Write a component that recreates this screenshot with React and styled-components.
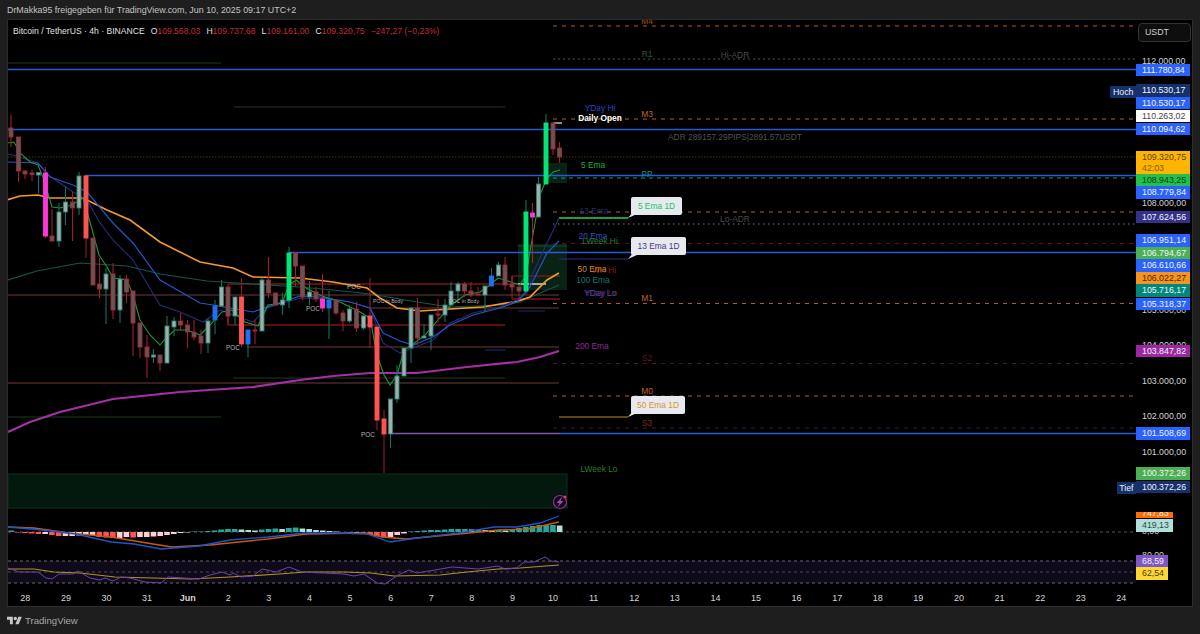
import styled, { createGlobalStyle } from "styled-components";

const GlobalStyle = createGlobalStyle`
  html, body { margin: 0; padding: 0; background: #1e1e1e; }
  body { font-family: "Liberation Sans", Arial, sans-serif; }
`;

const Page = styled.div`
  width: 1200px;
  height: 634px;
  display: flex;
  flex-direction: column;
  overflow: hidden;
  background: #1e1e1e;
`;
const ShareLine = styled.div`
  height: 19px;
  padding-left: 7px;
  box-sizing: border-box;
  color: #c4c4c4;
  font-size: 8.9px;
  line-height: 21px;
  white-space: nowrap;
`;
const Frame = styled.div`
  height: 588px;
  margin: 0 7px 0 7px;
  display: flex;
  background: #000;
  border-left: 1px solid #2a2a2a;
  border-top: 1px solid #2a2a2a;
  border-right: 1px solid #2e2e2e;
  border-bottom: 1px solid #2e2e2e;
  box-sizing: border-box;
`;
const ChartColumn = styled.div`
  width: 1128px;
  display: flex;
  flex-direction: column;
  overflow: hidden;
`;
const Stage = styled.div`
  position: relative;
  height: 570px;
  overflow: hidden;
`;
const ChartSvg = styled.svg`
  display: block;
  position: absolute;
  left: 0;
  top: 0;
`;
const Legend = styled.div`
  position: absolute;
  left: 5px;
  top: 5px;
  display: flex;
  align-items: center;
  gap: 6px;
  font-size: 8.6px;
  line-height: 12px;
  color: #e0e0e0;
  white-space: nowrap;
`;
const LegendTitle = styled.span`
  margin-right: 0;
`;
const Ohlc = styled.span`
  color: #e0e0e0;
  span {
    color: #c4283c;
  }
`;
const Change = styled.span`
  color: #c4283c;
`;
const ChartLabel = styled.span`
  position: absolute;
  left: ${(p) => p.$x - 8}px;
  top: ${(p) => p.$y - 20}px;
  transform: translate(-50%, -50%);
  color: ${(p) => p.$color};
  font-size: ${(p) => p.$size || 8.4}px;
  font-weight: ${(p) => (p.$bold ? 700 : 400)};
  white-space: nowrap;
`;
const Callout = styled.div`
  position: absolute;
  left: ${(p) => p.$x - 8}px;
  top: ${(p) => p.$y - 20}px;
  width: ${(p) => p.$w}px;
  height: 18px;
  box-sizing: border-box;
  background: #e6eaef;
  border-radius: 2px;
  color: ${(p) => p.$color};
  font-size: 8.4px;
  line-height: 18px;
  text-align: center;
  white-space: nowrap;
`;
const TimeAxis = styled.div`
  height: 16px;
  margin-left: -3px;
  display: grid;
  grid-template-columns: repeat(28, 40.6px);
  align-items: center;
`;
const TimeLabel = styled.span`
  text-align: center;
  color: #d6d6d6;
  font-size: 9px;
  font-weight: ${(p) => (p.$bold ? 700 : 400)};
  line-height: 16px;
`;
const PriceAxis = styled.div`
  position: relative;
  flex: 1;
`;
const UnitButton = styled.div`
  position: absolute;
  left: 2px;
  top: 3px;
  width: 53px;
  height: 19px;
  box-sizing: border-box;
  border: 1px solid #333;
  border-radius: 4px;
  background: #0e0e0e;
  color: #cfcfcf;
  font-size: 8.8px;
  line-height: 17px;
  padding-left: 6px;
`;
const PlainPrice = styled.span`
  position: absolute;
  left: 6px;
  top: ${(p) => p.$y - 20 - 6}px;
  color: #d2d2d2;
  font-size: 8.8px;
  line-height: 12px;
`;
const PriceTag = styled.div`
  position: absolute;
  left: 0;
  top: ${(p) => p.$y - 20 - 6.5}px;
  width: ${(p) => p.$w || 54}px;
  height: ${(p) => p.$h || 12.5}px;
  box-sizing: border-box;
  padding-left: 6px;
  overflow: hidden;
  background: ${(p) => p.$bg};
  color: ${(p) => p.$fg || "#f0f4ff"};
  font-size: 8.8px;
  line-height: ${(p) => p.$lh || 12.5}px;
`;
const PriceSub = styled.div`
  opacity: 0.75;
  line-height: 10.5px;
`;
const SideTag = styled.div`
  position: absolute;
  right: 56px;
  top: ${(p) => p.$y - 20 - 6.5}px;
  height: 12.5px;
  padding: 0 2.5px;
  background: #15306b;
  color: #f0f0f0;
  font-size: 8.8px;
  line-height: 12.5px;
`;
const Footer = styled.div`
  height: 27px;
  padding-left: 7px;
  display: flex;
  align-items: center;
  gap: 3px;
  color: #a8a8a8;
  font-size: 9.6px;
`;

// x, wick top, wick bottom, body top, body bottom, kind
const candles = [
  [11, 115, 147, 128, 137, "d"], [18.5, 137, 182, 137, 171, "d"], [25, 170, 179, 171, 174, "d"],
  [32, 170, 181, 173, 174.5, "d"], [38.5, 173, 193, 172.5, 175, "u"], [45.5, 167, 238, 173, 236, "p"],
  [52, 209, 241, 236, 241, "d"], [59, 203, 247, 212, 241, "u"], [65.5, 187, 225, 202, 212, "u"],
  [72.5, 192, 241, 202, 208, "d"], [79, 172, 215, 176, 208, "u"], [86, 176, 258, 176, 238, "r"],
  [93, 238, 285, 238, 285, "d"], [99.5, 258, 298, 284, 289, "d"], [106, 268, 324, 274, 289, "u"],
  [113, 263, 319, 274, 310, "d"], [120, 275, 323, 279, 310, "u"], [126.5, 275, 303, 279, 292, "d"],
  [133, 291, 356, 291, 323, "d"], [140, 323, 358, 323, 347, "d"], [147, 335, 378, 347, 357, "d"],
  [153.5, 349, 363, 355, 357, "u"], [160, 355, 371, 355, 363, "d"], [167, 316, 363, 326, 363, "u"],
  [174, 317, 336, 321, 327, "u"], [180.5, 313, 330, 321, 325, "d"], [187.5, 320, 348, 325, 332, "d"],
  [194, 320, 340, 332, 337, "d"], [201, 330, 354, 336, 343, "d"], [208, 318, 353, 321, 343, "u"],
  [215, 300, 334, 306, 320, "b"], [221.5, 280, 306, 287, 306, "u"], [228, 287, 324, 287, 316, "d"],
  [235, 297, 325, 297, 316, "u"], [241.5, 278, 347, 297, 344, "r"], [248, 330, 357, 330, 344, "b"],
  [255, 320, 344, 330, 331, "d"], [262, 278, 331, 280, 331, "u"], [268.5, 257, 298, 280, 293, "d"],
  [275.5, 293, 305, 293, 305, "d"], [282.5, 293, 315, 300, 305, "u"], [289, 247, 308, 253, 300, "g"],
  [295.5, 252, 287, 253, 266, "d"], [302.5, 266, 300, 266, 297, "d"], [309.5, 281, 305, 292, 297, "u"],
  [316, 287, 302, 292, 299, "d"], [322.5, 274, 312, 299, 308, "p"], [329, 291, 339, 300, 308, "b"],
  [336, 300, 315, 300, 313, "d"], [343, 310, 331, 313, 321, "d"], [349.5, 305, 323, 309, 321, "u"],
  [356.5, 302, 332, 309, 328, "d"], [363.5, 313, 330, 316, 328, "u"], [370, 278, 348, 316, 327, "r"],
  [377, 327, 430, 327, 420, "r"], [384, 410, 473, 419, 434, "r"], [390.5, 399, 448, 399, 434, "u"],
  [397, 365, 403, 376, 399, "u"], [404, 348, 376, 348, 376, "u"], [411, 308, 363, 308, 348, "u"],
  [417.5, 298, 345, 308, 338, "d"], [424, 324, 338, 336, 338, "u"], [431, 315, 350, 315, 336, "u"],
  [438, 299, 323, 314, 315, "d"], [445, 299, 322, 305, 315, "u"], [451, 282, 305, 291, 305, "u"],
  [458, 282, 303, 284, 291, "u"], [464.5, 282, 297, 284, 291, "d"], [471, 282, 297, 291, 295, "d"],
  [478, 287, 295, 294, 295, "d"], [485, 286, 312, 286, 295, "u"], [491.5, 268, 286, 276, 286, "b"],
  [498.5, 262, 276, 265, 276, "u"], [505, 257, 290, 265, 285, "d"], [512, 276, 290, 284, 287, "d"],
  [519, 287, 300, 287, 291, "d"], [526, 200, 292, 212, 291, "g"], [532.5, 203, 263, 213, 217, "p"],
  [538.5, 177, 217, 184, 217, "u"], [546, 114, 184, 123, 184, "g"], [553, 123, 155, 123, 149, "d"],
  [559.5, 142, 163, 148, 157, "d"],
];

const kinds = {
  u: { fill: "#a4aba9", stroke: "#1c8a7a", wick: "#15705f" },
  d: { fill: "#5a5a5a", stroke: "#b3202f", wick: "#9c1f2e" },
  p: { fill: "#ff35dc", stroke: "#ff35dc", wick: "#a3213a" },
  r: { fill: "#ff5252", stroke: "#ff5252", wick: "#8f1f2c" },
  g: { fill: "#00e676", stroke: "#00e676", wick: "#15705f" },
  b: { fill: "#2070f0", stroke: "#2070f0", wick: "#15705f" },
};

const ema5 = "8,143 14,142 20,153 30,162 38,165 44,180 52,207 60,208 72,205 83,198 90,222 99,255 107,267 113,278 127,280 133,295 140,320 150,335 160,345 167,337 175,330 187,330 200,335 210,325 222,312 232,310 245,322 258,326 268,305 282,303 289,285 296,280 306,288 322,296 340,302 360,312 370,318 377,355 384,375 390,385 397,375 404,350 412,345 425,335 438,320 451,305 465,295 480,292 490,285 498,278 505,280 520,285 526,275 532,240 540,195 546,180 553,172 560,170";
const ema13 = "8,154 13,155 38,163 48,175 73,192 87,200 100,223 113,240 133,260 160,305 180,312 203,322 220,310 253,322 267,308 300,298 330,299 350,302 370,308 383,343 400,353 413,348 433,340 450,323 473,313 500,307 517,300 527,293 533,273 547,243 559,218";
const ema20 = "8,162 38,163 50,177 73,185 87,192 113,223 133,243 160,280 200,303 213,305 253,312 267,307 300,296 320,297 350,302 370,308 383,333 400,341 413,345 433,337 450,325 473,315 500,308 517,302 530,287 547,253 559,241";
const ema50 = "7,200 20,196 38,195 50,198 83,198 107,210 130,220 160,242 200,262 233,268 253,277 300,278 333,282 367,288 380,298 397,308 420,311 450,309 483,307 518,301 530,297 547,280 559,273";
const ema100 = "8,280 37,271 80,263 127,266 160,274 207,281 267,285 300,287 333,290 370,294 417,302 450,307 500,305 520,302 540,293 559,285";
const ema200 = "8,432 30,422 60,412 113,399 180,392 253,387 300,380 333,376 370,373 417,373 467,367 517,362 540,357 559,351";
const macdLine = "8,527 42,530 76,534 111,542 134,544 161,549 199,546 230,540 268,537 306,533 337,533 367,534 390,542 417,538 459,533 494,527 517,527 540,523 559,516";
const macdSignal = "8,527 34,528 69,533 111,537 153,544 172,547 210,545 268,539 306,534 364,533 383,537 406,539 459,534 498,530 528,529 559,522";
const rsiLine = "8,568 19,572 38,572 46,578 52,579 59,574 73,574 78,571 90,578 100,580 105,578 113,581 121,577 130,578 145,582 161,583 168,577 199,579 210,575 222,572 230,575 233,573 241,577 253,576 262,569 276,572 289,567 302,572 344,574 354,576 364,574 377,583 385,584 398,575 409,570 417,573 429,571 452,567 478,569 498,566 505,569 517,568 524,562 534,562 545,557 551,561 559,562";
const rsiSignal = "8,569 34,569 54,572 80,573 115,577 153,578 191,579 230,577 279,574 306,572 344,572 371,573 394,576 440,575 467,572 498,569 520,568 559,565";

const hist = [
  1.5, -0.5, -1, -1.5, -2, -2, -3, -4, -4, -4, -3.5, -3, -3, -5, -5.5, -6, -6, -5, -5.5, -5, -5, -4.5, -4, -3, -2, -1, -0.5,
  0.5, 0.5, 1, 1.5, 2.5, 3, 3, 2.5, 2, 1.5, 2.5, 3, 3.5, 3, 4, 4.5, 3.5, 3, 2, 1.5, 1, 0.5,
  -0.5, -1, -1, -1.5, -2, -4, -5.5, -5, -3, -1.5,
  0.5, 1, 1.5, 2, 2, 2.5, 3, 3, 3, 2.5, 2.5, 2, 1.5, 2, 1.5, 3, 4, 5, 6, 7, 7, 7, 6.5,
];

// y, x from, x to, colour, width, dash
const hLines = [
  [26, 553, 1136, "#b85c1a", 1, "4 5"],
  [59, 553, 1136, "#3c5a44", 1, "2 3"],
  [63, 8, 221, "#1a3a1c", 1],
  [69.5, 8, 1136, "#2a5bd0", 1.6],
  [107, 234, 505, "#1a3a1c", 1],
  [119, 553, 1136, "#b85c1a", 1, "4 5"],
  [129.5, 8, 1136, "#2a5bd0", 1.6],
  [157, 8, 1136, "#4d3608", 1, "1.5 1.5"],
  [175.5, 85, 1136, "#2a5bd0", 1.6],
  [178, 553, 1136, "#0f8f9c", 1, "4 4"],
  [212, 553, 1136, "#b85c1a", 1, "4 5"],
  [224, 553, 1136, "#7a7a7a", 1, "1.5 3.5"],
  [243.5, 553, 1136, "#4a1a1a", 1, "4 5"],
  [252.5, 289, 1136, "#2a5bd0", 1.6],
  [303.5, 553, 1136, "#b85c1a", 1, "4 5"],
  [363.5, 553, 1136, "#4a1a1a", 1, "4 5"],
  [396, 553, 1136, "#b85c1a", 1, "4 5"],
  [428, 553, 1136, "#4a1a1a", 1, "4 5"],
  [284, 228, 535, "#b02020", 1.2],
  [325, 228, 505, "#b02020", 1.2],
  [295, 8, 559, "#703a3a", 1.2],
  [308, 370, 559, "#703a3a", 1.2],
  [347, 247, 559, "#703a3a", 1.2],
  [383, 8, 559, "#703a3a", 1.2],
  [276, 512, 560, "#8a2020", 1],
  [299, 512, 560, "#b02020", 1.2],
  [284, 518, 546, "#e0e0e0", 1.4],
  [378, 233, 505, "#1a3a1c", 1],
  [417, 8, 221, "#1a3a1c", 1],
  [350, 485, 506, "#1c2c70", 1],
  [311, 518, 545, "#1c2c70", 1],
  [433.5, 390, 560, "#7a5aa8", 1.6],
  [433.5, 560, 1136, "#2a5bd0", 1.6],
  [218, 559, 628, "#1f9e3c", 1.8],
  [259, 559, 628, "#2c2c80", 1.2],
  [417, 559, 628, "#c88a28", 1.2],
  [532, 8, 1136, "#555", 1, "3 3"],
  [561, 8, 1136, "#6a6a6a", 1, "3 3"],
  [572, 8, 1136, "#4a4a4a", 1, "3 3"],
  [583, 8, 1136, "#6a6a6a", 1, "3 3"],
];

const labels = [
  ["M4", 647, 21, "#a8551a"], ["R1", 647, 54, "#2c5a34"], ["Hi-ADR", 735, 55, "#4a4a4a"],
  ["YDay Hi", 600, 108, "#2848c0"], ["M3", 647, 114, "#c0641c"], ["ADR 289157.29PIPS|2891.57USDT", 735, 137, "#505050"],
  ["5 Ema", 593, 165, "#1fae3c"], ["PP", 647, 174, "#0f8f9c"], ["13 Ema", 594, 211, "#2a2a78"],
  ["Lo-ADR", 735, 219, "#4a4a4a"], ["20 Ema", 593, 236, "#2a50c0"], ["LWeek Hi", 600, 241, "#2f7a34"],
  ["S1", 647, 240, "#5a1c1c"], ["WH Hi", 604, 270, "#8f1f1f"], ["50 Ema", 592, 269, "#d08a28"],
  ["100 Ema", 593, 280, "#0f7a6c"], ["YDay Lo", 601, 293, "#8f1f1f"], ["YDay Lo", 600, 293, "#2848c0"],
  ["M1", 647, 298, "#c0641c"], ["200 Ema", 592, 346, "#8e2a96"], ["S2", 647, 358, "#5a1c1c"],
  ["M0", 647, 391, "#c0641c"], ["S3", 647, 423, "#7a3018"], ["LWeek Lo", 599, 469, "#2f7a34"],
];

const pocs = [
  ["POC", 354, 286, 6.4], ["POC", 313, 308, 6.4], ["POC", 233, 347, 6.4], ["POC", 368, 434, 6.4],
  ["POC in Body", 388, 301, 5.2], ["POC in Body", 464, 301, 5.2],
];

const plainPrices = [
  ["112.000,00", 61], ["108.000,00", 203], ["105.000,00", 310], ["104.000,00", 345], ["103.000,00", 380.5],
  ["102.000,00", 416], ["101.000,00", 451.5], ["0,00", 531], ["80,00", 555],
];

const blue = "#2962ff";
const priceTags = [
  ["111.780,84", 70, blue], ["110.530,17", 90.5, "#15306b"], ["110.530,17", 103, blue],
  ["110.263,02", 116, "#ffffff", "#444"], ["110.094,62", 129, blue],
  ["108.943,25", 180, "#22c04c", "#0c3a18"], ["108.779,84", 192.5, blue], ["107.624,56", 217, "#363088"],
  ["106.951,14", 240.5, blue], ["106.794,67", 253, "#4caf50"], ["106.610,66", 265.5, blue],
  ["106.022,27", 278, "#f7931e", "#4a2a00"], ["105.716,17", 290.5, "#00897b"], ["105.318,37", 304, blue],
  ["103.847,82", 351, "#9c27a0"], ["101.508,69", 433.5, blue], ["100.372,26", 473.5, "#4caf50"],
  ["100.372,26", 487, "#15306b"],
];

const days = ["28", "29", "30", "31", "Jun", "2", "3", "4", "5", "6", "7", "8", "9", "10", "11", "12", "13", "14", "15", "16", "17", "18", "19", "20", "21", "22", "23", "24"];

function Candle({ c }) {
  const [x, wt, wb, bt, bb, kind] = c;
  const k = kinds[kind];
  return (
    <g>
      <line x1={x} x2={x} y1={wt} y2={wb} stroke={k.wick} strokeWidth="1.1" />
      <rect x={x - 2} y={bt} width="4" height={Math.max(bb - bt, 1)} fill={k.fill} stroke={k.stroke} strokeWidth="0.9" />
    </g>
  );
}

function Histogram() {
  return hist.map((v, i) => {
    const prev = i ? hist[i - 1] : 0;
    let color = v >= 0 ? (v >= prev ? "#26a69a" : "#b2dfdb") : v < prev ? "#ff5252" : "#ffcdd2";
    const h = Math.abs(v);
    return <rect key={i} x={8.5 + 6.77 * i} y={v >= 0 ? 532 - h : 532} width="5.6" height={h} fill={color} />;
  });
}

function Chart() {
  return (
    <ChartSvg width="1128" height="570" viewBox="8 20 1128 570">
      <rect x="8" y="561" width="1128" height="22" fill="#0e0a1a" />
      <rect x="8" y="474" width="559" height="34" fill="#04190e" stroke="#0a3320" strokeWidth="1" />
      <rect x="548" y="163" width="19" height="20" fill="#0b2a1a" opacity="0.8" />
      <rect x="518" y="244" width="49" height="46" fill="#0b2a1a" opacity="0.8" />
      <line x1="518" x2="567" y1="246" y2="246" stroke="#1a4a2c" />
      {hLines.map(([y, a, b, color, w, dash], i) => (
        <line key={i} x1={a} x2={b} y1={y} y2={y} stroke={color} strokeWidth={w} strokeDasharray={dash} />
      ))}
      <line x1="228" x2="228" y1="284" y2="325" stroke="#b02020" />
      <line x1="512" x2="512" y1="276" y2="299" stroke="#b02020" />
      <line x1="553" x2="562" y1="123" y2="123" stroke="#e8e8e8" strokeWidth="1.2" />
      <polyline points={ema100} fill="none" stroke="#0c5a4c" strokeWidth="1.2" />
      <polyline points={ema200} fill="none" stroke="#a62fa8" strokeWidth="2.2" />
      <polyline points={ema50} fill="none" stroke="#f59a2c" strokeWidth="1.6" />
      <polyline points={ema13} fill="none" stroke="#2a2a78" strokeWidth="1.1" />
      <polyline points={ema20} fill="none" stroke="#2456c8" strokeWidth="1.2" />
      <polyline points={ema5} fill="none" stroke="#1b9a36" strokeWidth="1.1" />
      {candles.map((c, i) => (
        <Candle key={i} c={c} />
      ))}
      <path d="M628 218 L633 212 L637 214 Z" fill="#e6eaef" />
      <path d="M628 259 L633 253 L637 255 Z" fill="#e6eaef" />
      <path d="M628 417 L633 411 L637 413 Z" fill="#e6eaef" />
      <Histogram />
      <polyline points={macdSignal} fill="none" stroke="#c85a10" strokeWidth="1.3" />
      <polyline points={macdLine} fill="none" stroke="#1f55c8" strokeWidth="1.3" />
      <polyline points={rsiSignal} fill="none" stroke="#b09420" strokeWidth="1.2" />
      <polyline points={rsiLine} fill="none" stroke="#6a45a8" strokeWidth="1" />
      <circle cx="560" cy="502" r="6.5" fill="#06060a" stroke="#9c27b0" strokeWidth="1.2" />
      <path d="M562.5 496.5 L556.5 503 H559.5 L557.5 507.5 L563.5 501 H560.5 Z" fill="#b040c8" />
      <circle cx="565" cy="497" r="1.6" fill="#f23645" />
    </ChartSvg>
  );
}

function App() {
  return (
    <Page>
      <GlobalStyle />
      <ShareLine>DrMakka95 freigegeben für TradingView.com, Jun 10, 2025 09:17 UTC+2</ShareLine>
      <Frame>
        <ChartColumn>
          <Stage>
            <Chart />
            <Legend>
              <LegendTitle>Bitcoin / TetherUS · 4h · BINANCE</LegendTitle>
              <Ohlc>O<span>109.568,03</span></Ohlc>
              <Ohlc>H<span>109.737,68</span></Ohlc>
              <Ohlc>L<span>109.161,00</span></Ohlc>
              <Ohlc>C<span>109.320,75</span></Ohlc>
              <Change>−247,27 (−0,23%)</Change>
            </Legend>
            {labels.map(([text, x, y, color], i) => (
              <ChartLabel key={i} $x={x} $y={y} $color={color}>{text}</ChartLabel>
            ))}
            {pocs.map(([text, x, y, size], i) => (
              <ChartLabel key={i} $x={x} $y={y} $size={size} $color="#b4b4b4">{text}</ChartLabel>
            ))}
            <ChartLabel $x={600} $y={118} $color="#fff" $bold>Daily Open</ChartLabel>
            <Callout $x={631} $y={197} $w={51} $color="#22c45e">5 Ema 1D</Callout>
            <Callout $x={631} $y={237} $w={55} $color="#3d3a8c">13 Ema 1D</Callout>
            <Callout $x={631} $y={396} $w={54} $color="#e0932c">50 Ema 1D</Callout>
          </Stage>
          <TimeAxis>
            {days.map((d) => (
              <TimeLabel key={d} $bold={d === "Jun"}>{d}</TimeLabel>
            ))}
          </TimeAxis>
        </ChartColumn>
        <PriceAxis>
          <UnitButton>USDT</UnitButton>
          {plainPrices.map(([text, y]) => (
            <PlainPrice key={text} $y={y}>{text}</PlainPrice>
          ))}
          <SideTag $y={92}>Hoch</SideTag>
          <SideTag $y={488}>Tief</SideTag>
          {priceTags.map(([text, y, bg, fg], i) => (
            <PriceTag key={i} $y={y} $bg={bg} $fg={fg}>{text}</PriceTag>
          ))}
          <PriceTag $y={157} $h={23} $bg="#ffb400" $fg="#5a4200">
            109.320,75
            <PriceSub>42:03</PriceSub>
          </PriceTag>
          <PriceTag $y={518} $h={6.5} $lh={3} $w={37} $bg="#ff6d00">747,83</PriceTag>
          <PriceTag $y={525.5} $w={37} $bg="#b2dfdb" $fg="#2c4a46">419,13</PriceTag>
          <PriceTag $y={561} $w={32} $bg="#7e57c2">68,59</PriceTag>
          <PriceTag $y={573.5} $w={32} $bg="#fdd835" $fg="#4a3c00">62,54</PriceTag>
        </PriceAxis>
      </Frame>
      <Footer>
        <svg width="15" height="12" viewBox="0 0 36 28" fill="#c8c8c8">
          <path d="M14 22H7V11H0V4h14v18zM28 22h-8l7.5-18h8L28 22z" />
          <circle cx="20" cy="8" r="4" />
        </svg>
        TradingView
      </Footer>
    </Page>
  );
}

export default App;
